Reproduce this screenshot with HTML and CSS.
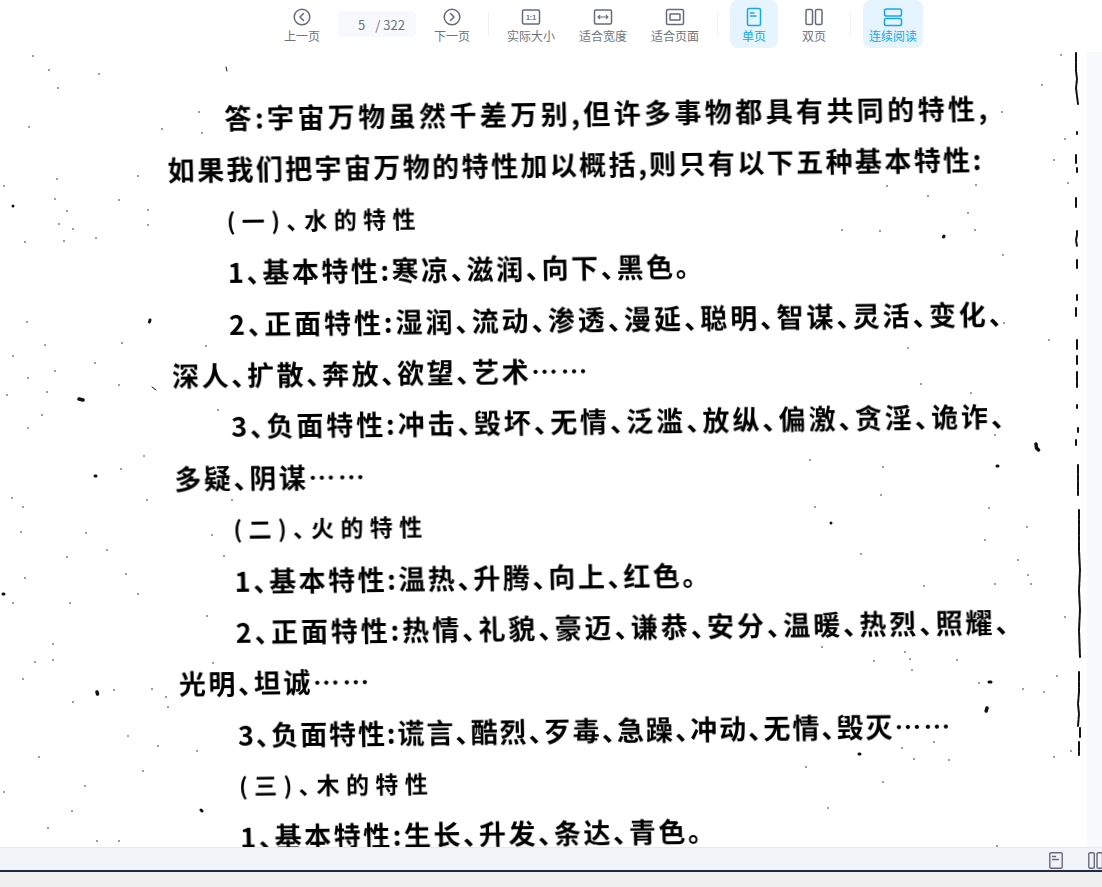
FILE: index.html
```html
<!DOCTYPE html>
<html lang="zh-CN">
<head>
<meta charset="utf-8">
<title>PDF</title>
<link rel="stylesheet" href="styles.css">
</head>
<body>
<div class="app">
  <header class="toolbar">
    <button class="tool"><svg class="ico" viewBox="0 0 20 20"><circle cx="10" cy="10" r="7.8"/><path d="M11.5 6.5 8 10l3.5 3.5"/></svg><span>上一页</span></button>
    <div class="pager"><span class="cur">5</span><span>/ 322</span></div>
    <button class="tool"><svg class="ico" viewBox="0 0 20 20"><circle cx="10" cy="10" r="7.8"/><path d="M8.5 6.5 12 10l-3.5 3.5"/></svg><span>下一页</span></button>
    <i class="sep"></i>
    <button class="tool wide"><svg class="ico" viewBox="0 0 20 20"><rect x="1.5" y="3" width="17" height="14" rx="1.5"/><text x="10" y="12.6" class="ratio">1:1</text></svg><span>实际大小</span></button>
    <button class="tool wide"><svg class="ico" viewBox="0 0 20 20"><rect x="1.5" y="3" width="17" height="14" rx="1.5"/><path class="thin" d="M5 10h10M6.8 8.4 5 10l1.8 1.6M13.2 8.4 15 10l-1.8 1.6"/></svg><span>适合宽度</span></button>
    <button class="tool wide"><svg class="ico" viewBox="0 0 20 20"><rect x="1.5" y="2.5" width="17" height="15" rx="1.5"/><rect x="5" y="7" width="10" height="6" rx=".6"/></svg><span>适合页面</span></button>
    <i class="sep"></i>
    <button class="tool on"><svg class="ico" viewBox="0 0 20 20"><rect x="3.5" y="1.5" width="13" height="17" rx="1.5"/><path d="M6.5 6h3.5M6.5 9h5.5"/></svg><span>单页</span></button>
    <button class="tool"><svg class="ico" viewBox="0 0 20 20"><rect x="2" y="2.5" width="6.5" height="15" rx="1.5"/><rect x="11.5" y="2.5" width="6.5" height="15" rx="1.5"/></svg><span>双页</span></button>
    <i class="sep"></i>
    <button class="tool wide on"><svg class="ico" viewBox="0 0 20 20"><rect x="1.5" y="2" width="17" height="7" rx="1.8"/><rect x="1.5" y="11.5" width="17" height="7" rx="1.8"/></svg><span>连续阅读</span></button>
  </header>

  <main class="main">
    <section class="viewer">
      <div class="scan">
        <p class="line in ls1">答:宇宙万物虽然千差万别,但许多事物都具有共同的特性,</p>
        <p class="line ls2">如果我们把宇宙万物的特性加以概括,则只有以下五种基本特性:</p>
        <p class="line in head">(一)、水的特性</p>
        <p class="line in">1、基本特性:寒凉、滋润、向下、黑色。</p>
        <p class="line in ls4">2、正面特性:湿润、流动、渗透、漫延、聪明、智谋、灵活、变化、</p>
        <p class="line">深人、扩散、奔放、欲望、艺术……</p>
        <p class="line in ls4">3、负面特性:冲击、毁坏、无情、泛滥、放纵、偏激、贪淫、诡诈、</p>
        <p class="line">多疑、阴谋……</p>
        <p class="line in head">(二)、火的特性</p>
        <p class="line in">1、基本特性:温热、升腾、向上、红色。</p>
        <p class="line in ls4">2、正面特性:热情、礼貌、豪迈、谦恭、安分、温暖、热烈、照耀、</p>
        <p class="line">光明、坦诚……</p>
        <p class="line in ls3">3、负面特性:谎言、酷烈、歹毒、急躁、冲动、无情、毁灭……</p>
        <p class="line in head">(三)、木的特性</p>
        <p class="line in">1、基本特性:生长、升发、条达、青色。</p>
      </div>
      <svg class="specks" viewBox="0 52 1087 795" aria-hidden="true">
        <path class="sm" d="M33 56h0M49 70h0M99 74h0M58 88h0M29 127h0M199 112h0M162 129h0M202 133h0M57 179h0M138 176h0M4 186h0M55 199h0M119 200h0M67 211h0M148 210h0M148 225h0M73 229h0M59 224h0M64 241h0M96 238h0M25 242h0M27 322h0M122 343h0M45 345h0M206 346h0M13 356h0M95 363h0M55 371h0M28 378h0M119 385h0M47 392h0M7 395h0M218 410h0M42 415h0M28 428h0M121 469h0M144 456h0M12 498h0M23 507h0M147 500h0M232 500h0M21 532h0M86 533h0M212 535h0M107 550h0M67 557h0M224 556h0M126 574h0M25 578h0M138 594h0M13 603h0M70 603h0M207 616h0M53 644h0M35 662h0M53 660h0M213 663h0M23 679h0M114 690h0M152 689h0M73 702h0M168 707h0M166 697h0M128 736h0M158 746h0M197 751h0M39 757h0M143 771h0M4 792h0M85 786h0M72 811h0M48 828h0M97 841h0M119 841h0M1061 55h0M1042 85h0M1002 112h0M1065 139h0M1054 160h0M1068 183h0M887 186h0M976 185h0M928 196h0M968 213h0M842 230h0M880 231h0M975 230h0M1003 255h0M1004 323h0M908 348h0M1049 340h0M921 384h0M971 393h0M995 435h0M810 460h0M883 467h0M997 466h0M881 495h0M815 507h0M989 508h0M1027 527h0M985 540h0M861 554h0M1018 560h0M1028 575h0M1031 584h0M924 586h0M995 584h0M1065 617h0M822 647h0M905 652h0M910 659h0M874 661h0M957 660h0M912 670h0M979 683h0M1057 676h0M1023 689h0M1044 692h0M902 748h0M934 742h0M914 759h0M949 760h0M1054 757h0M1071 751h0M806 767h0M883 782h0M828 808h0M997 846h0"/>
        <path class="md" d="M13 206h0M150 320l-.5 2M95 476h1M3 594h1M831 523h0M944 236l-.5 1M989 682h2M859 754h1M201 810l1 1M997 466h1"/>
        <path class="lg" d="M79 399l4 1M97 692l.5 2M987 708l-.8 3M1036 444l.5 4 2 2"/>
        <path class="tick" d="M226 67l1 4M152 387l4 3"/>
        <path class="edge" d="M1076 53v18l1 8 -1 9 1 8 1 8M1077 132v2M1076 155v8M1077 168v4M1076 198v9M1077 231v4l-1 5 1 6M1077 260v8M1077 295v5M1076 308v8M1077 340v9M1077 356v8M1077 372v15M1077 405v3M1078 428v4M1076 440v5M1078 465v30M1079 510v40l1 20 -1 20 1 20 -1 20 1 27M1079 672v20l-1 12 1 10 -1 12M1080 728v10M1079 742v13"/>
      </svg>
    </section>
    <aside class="track"></aside>
  </main>

  <footer class="status">
    <svg class="ico small" viewBox="0 0 14 17"><rect x=".8" y=".8" width="12.4" height="15.4" rx="1.2"/><path d="M3.5 4.5h3M3.5 7.5h6"/></svg>
    <svg class="ico small" viewBox="0 0 14 17"><rect x=".8" y=".8" width="5.5" height="15.4" rx="1.2"/><rect x="9" y=".8" width="5.5" height="15.4" rx="1.2"/></svg>
  </footer>
  <div class="base"></div>
</div>
</body>
</html>
```
FILE: styles.css
```css
* { box-sizing: border-box; }
html, body { margin: 0; height: 100%; background: #fff; }
body { font-family: "Noto Sans CJK SC", "Noto Sans", sans-serif; overflow: hidden; }

.app { display: flex; flex-direction: column; height: 887px; overflow: hidden; }

.toolbar { flex: 0 0 52px; display: flex; align-items: flex-start; gap: 12px; padding-left: 278px; background: #fff; position: relative; z-index: 2; }
.tool { width: 48px; height: 48px; padding: 7px 0 0; border: 0; border-radius: 8px; background: none; font: inherit; display: flex; flex-direction: column; align-items: center; color: #6f7480; font-size: 12px; line-height: 14px; }
.tool.wide { width: 60px; }
.tool span { margin-top: 2px; white-space: nowrap; }
.tool.on { background: #e5f4fe; color: #19a6ee; }
.ico { width: 20px; height: 20px; fill: none; stroke: #666b7a; stroke-width: 1.5; stroke-linecap: round; stroke-linejoin: round; }
.tool.on .ico { stroke: #19a6ee; }
.ico .thin { stroke-width: 1.2; }
.ratio { fill: #666b7a; stroke: none; font: 700 7px "Liberation Sans", sans-serif; text-anchor: middle; }
.pager { width: 78px; height: 26px; margin-top: 11px; padding-left: 20px; display: flex; align-items: center; gap: 10px; background: #f7f9fc; border-radius: 4px; color: #6f7480; font-size: 13px; }
.sep { width: 1px; height: 24px; margin-top: 12px; background: #f0f1f3; }

.main { flex: 0 0 795px; display: flex; min-height: 0; }
.viewer { flex: 1; position: relative; overflow: hidden; background: #fff; }
.track { flex: 0 0 15px; background: #f8f9fc; }

.scan { display: flex; flex-direction: column; padding: 43px 0 0 165px; width: 1000px; transform-origin: 0 0; transform: rotate(-.75deg) skewX(.5deg); color: #000; font-size: 27px; font-weight: 700; font-feature-settings: "halt"; filter: blur(.3px); }
.line { margin: 0; flex: none; height: 51.4px; line-height: 51.4px; letter-spacing: 2.5px; white-space: nowrap; }
.in { padding-left: 58px; }
.head { font-size: 23px; letter-spacing: 6.4px; }
.ls1 { letter-spacing: 3.4px; }
.ls2 { letter-spacing: 2.4px; }
.ls3 { letter-spacing: 1.9px; }
.ls4 { letter-spacing: 2.9px; }

.specks { position: absolute; left: 0; top: 0; width: 1087px; height: 795px; fill: none; stroke: #111; stroke-linecap: round; stroke-linejoin: round; }
.specks .sm { stroke-width: 1.5; }
.specks .md { stroke-width: 3; }
.specks .lg { stroke-width: 3.5; }
.specks .tick { stroke-width: 1; }
.specks .edge { stroke-width: 2; stroke-dasharray: 9 1 5 1; }

.status { flex: 0 0 23px; display: flex; align-items: center; justify-content: flex-end; gap: 25px; padding-top: 3px; background: #f1f3f8; border-top: 1px solid #e6e8ec; }
.ico.small { width: 14px; height: 17px; flex: none; stroke-width: 1.4; }
.base { flex: 1; background: #efefef; border-top: 2px solid #1b2a4a; }
```
